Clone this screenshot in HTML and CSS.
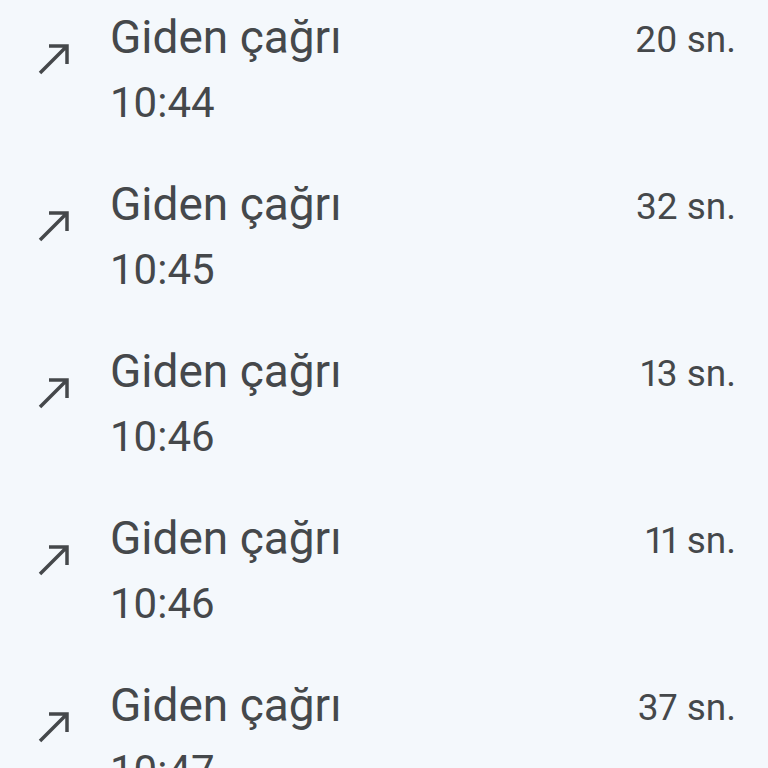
FILE: index.html
```html
<!DOCTYPE html>
<html>
<head>
    <title>Arama geçmişi</title>
    <meta charset="UTF-8">
    <link rel="stylesheet" href="styles.css">
</head>
<body>
    <div id="call_list">
        <div class="call_row">
            <svg class="call_icon" width="40" height="40" viewBox="0 0 40 40"><path d="M6 33 L33 6 M15 6 H33 V24" /></svg>
            <div class="call_text">
                <div class="call_type">Giden çağrı</div>
                <div class="call_time">10:44</div>
            </div>
            <div class="call_duration">20 sn.</div>
        </div>
        <div class="call_row">
            <svg class="call_icon" width="40" height="40" viewBox="0 0 40 40"><path d="M6 33 L33 6 M15 6 H33 V24" /></svg>
            <div class="call_text">
                <div class="call_type">Giden çağrı</div>
                <div class="call_time">10:45</div>
            </div>
            <div class="call_duration">32 sn.</div>
        </div>
        <div class="call_row">
            <svg class="call_icon" width="40" height="40" viewBox="0 0 40 40"><path d="M6 33 L33 6 M15 6 H33 V24" /></svg>
            <div class="call_text">
                <div class="call_type">Giden çağrı</div>
                <div class="call_time">10:46</div>
            </div>
            <div class="call_duration">13 sn.</div>
        </div>
        <div class="call_row">
            <svg class="call_icon" width="40" height="40" viewBox="0 0 40 40"><path d="M6 33 L33 6 M15 6 H33 V24" /></svg>
            <div class="call_text">
                <div class="call_type">Giden çağrı</div>
                <div class="call_time">10:46</div>
            </div>
            <div class="call_duration">11 sn.</div>
        </div>
        <div class="call_row">
            <svg class="call_icon" width="40" height="40" viewBox="0 0 40 40"><path d="M6 33 L33 6 M15 6 H33 V24" /></svg>
            <div class="call_text">
                <div class="call_type">Giden çağrı</div>
                <div class="call_time">10:47</div>
            </div>
            <div class="call_duration">37 sn.</div>
        </div>
    </div>
</body>
</html>
```

FILE: styles.css
```css
html {
    height: 100%;
}
body {
    margin: 0;
    height: 100%;
    overflow: hidden;
    background-color: #f4f8fc;
    color: #45484b;
    font-family: Roboto, "Noto Sans", sans-serif;
}
#call_list {
    display: flex;
    flex-direction: column;
}
.call_row {
    display: flex;
    align-items: flex-start;
    height: 167px;
    box-sizing: border-box;
    padding: 7px 32px 0 34px;
}
.call_icon {
    flex: none;
    margin-top: 33px;
    margin-right: 36px;
}
.call_icon path {
    fill: none;
    stroke: #45484b;
    stroke-width: 3.5;
}
.call_text {
    flex: 1;
}
.call_type {
    font-size: 46px;
    line-height: 60px;
}
.call_time {
    font-size: 42px;
    line-height: 72px;
}
.call_duration {
    font-size: 37px;
    line-height: 66px;
    font-variant-numeric: proportional-nums;
}
```
